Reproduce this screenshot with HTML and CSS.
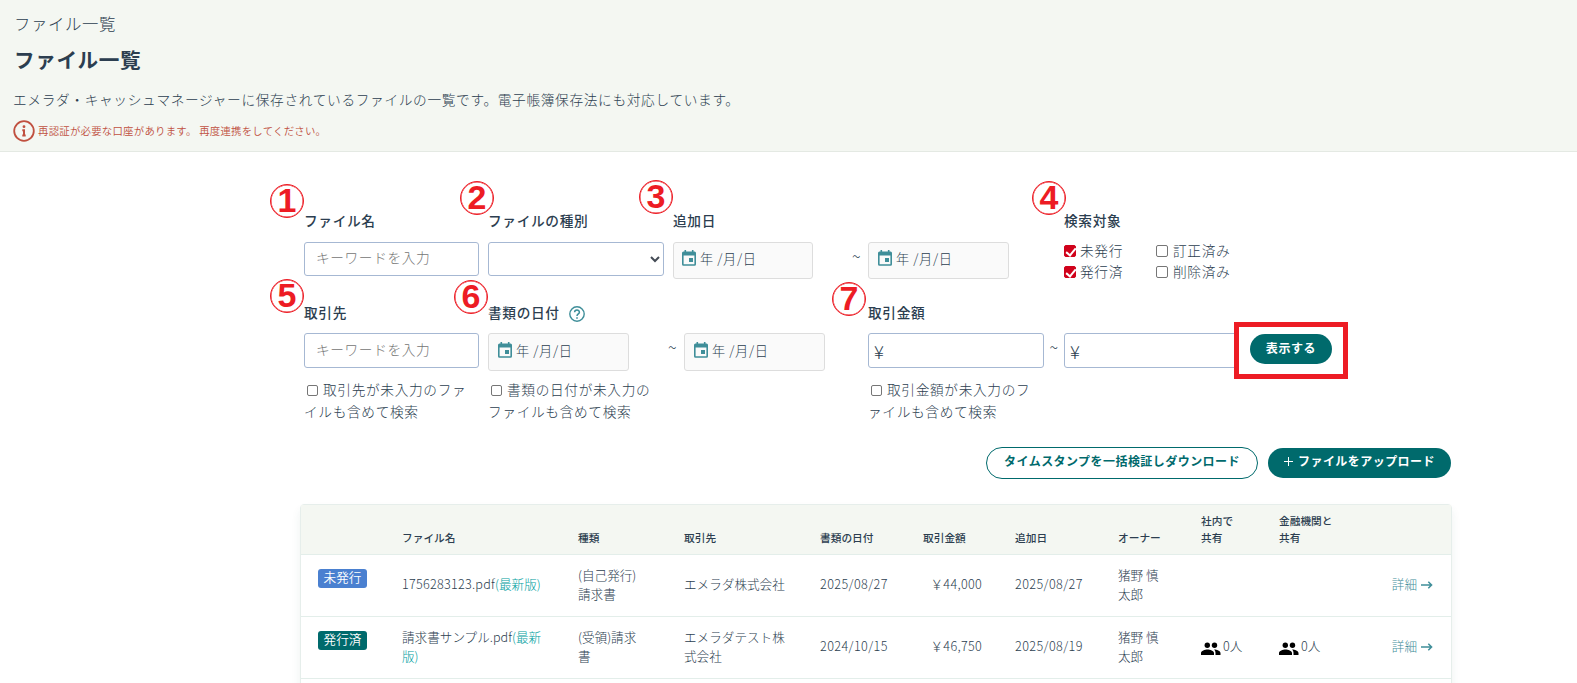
FILE: index.html
```html
<!DOCTYPE html>
<html lang="ja">
<head>
	<meta charset="UTF-8">
	<meta name="viewport" content="width=device-width, initial-scale=1.0">
	<title>ファイル一覧</title>
	<link rel="stylesheet" href="styles.css">
</head>
<body>
<svg class="defs" width="0" height="0">
	<symbol id="calendar" viewBox="0 0 14 16">
		<path fill="currentColor" fill-rule="evenodd" d="M2.5 0h1.6v1.6h5.8V0h1.6v1.6h1A1.5 1.5 0 0 1 14 3.1v11.2a1.5 1.5 0 0 1-1.5 1.5h-11A1.5 1.5 0 0 1 0 14.300V3.100A1.500 1.500 0 0 1 1.500 1.600h1zM1.600 5.500v8.700h10.800V5.500z"/>
		<path fill="currentColor" d="M7 8h4v4H7z"/>
	</symbol>
	<symbol id="people" viewBox="0 0 20 13">
		<circle cx="6.300" cy="3.200" r="2.700"/>
		<circle cx="13.500" cy="3.200" r="2.700"/>
		<path d="M0 13v-2c0-2.300 4-3.600 6.500-3.600S13 8.700 13 11v2zM13.100 7.500c2.600 0 6.400 1.200 6.400 3.500v2h-5v-2c0-1.500-.5-2.600-1.400-3.500z"/>
	</symbol>
	<symbol id="arrow" viewBox="0 0 12 10">
		<path fill="none" stroke="currentColor" stroke-width="1.500" d="M0 5h10.500M7.300 1.700L10.600 5 7.300 8.300"/>
	</symbol>
</svg>

<header class="page-header">
	<div class="breadcrumb">ファイル一覧</div>
	<h1>ファイル一覧</h1>
	<p class="lead">エメラダ・キャッシュマネージャーに保存されているファイルの一覧です。電子帳簿保存法にも対応しています。</p>
	<div class="notice">
		<svg width="22" height="22" viewBox="0 0 22 22"><circle cx="11" cy="11" r="9.800" fill="none" stroke="currentColor" stroke-width="1.800"/><circle cx="11" cy="6.700" r="1.400" fill="currentColor"/><path fill="none" stroke="currentColor" stroke-width="2" d="M9.300 10.200h1.700v5.300M9.300 15.500h3.400"/></svg>
		<span>再認証が必要な口座があります。 再度連携をしてください。</span>
	</div>
</header>

<main class="container">
	<form class="search">
		<div class="search-row first">
			<div class="field c1">
				<label>ファイル名</label><b class="num n1">1</b>
				<input class="text" type="text" placeholder="キーワードを入力">
			</div>
			<div class="field c2">
				<label>ファイルの種別</label><b class="num n2">2</b>
				<div class="select"><svg width="10" height="7" viewBox="0 0 10 7"><path fill="none" stroke="#444b55" stroke-width="2" d="M1 1l4 4 4-4"/></svg></div>
			</div>
			<div class="field c3">
				<label>追加日</label><b class="num n3">3</b>
				<div class="range">
					<div class="date"><svg class="cal"><use href="#calendar"/></svg>年 /月/日</div>
					<span class="tilde">~</span>
					<div class="date"><svg class="cal"><use href="#calendar"/></svg>年 /月/日</div>
				</div>
			</div>
			<div class="field c4">
				<label>検索対象</label><b class="num n4">4</b>
				<div class="checks">
					<span><i class="box on"></i>未発行</span>
					<span><i class="box"></i>訂正済み</span>
					<span><i class="box on"></i>発行済</span>
					<span><i class="box"></i>削除済み</span>
				</div>
			</div>
		</div>

		<div class="search-row second">
			<div class="field c1">
				<label>取引先</label><b class="num n5">5</b>
				<input class="text" type="text" placeholder="キーワードを入力">
				<p class="include"><i class="box"></i>取引先が未入力のファ<br>イルも含めて検索</p>
			</div>
			<div class="field c2">
				<label>書類の日付<svg class="help" viewBox="0 0 16 16"><circle cx="8" cy="8" r="7.200" fill="none" stroke="currentColor" stroke-width="1.400"/><path fill="none" stroke="currentColor" stroke-width="1.500" d="M5.600 6.300C5.600 3.300 10.400 3.300 10.400 6.200c0 1.700-2.400 1.800-2.400 3.800"/><path fill="currentColor" d="M7.200 11.200h1.600v1.500H7.200z"/></svg></label><b class="num n6">6</b>
				<div class="range">
					<div class="date"><svg class="cal"><use href="#calendar"/></svg>年 /月/日</div>
					<span class="tilde">~</span>
					<div class="date"><svg class="cal"><use href="#calendar"/></svg>年 /月/日</div>
				</div>
				<p class="include"><i class="box"></i>書類の日付が未入力の<br>ファイルも含めて検索</p>
			</div>
			<div class="field c3">
				<label>取引金額</label><b class="num n7">7</b>
				<div class="range">
					<div class="yen">¥</div>
					<span class="tilde">~</span>
					<div class="yen">¥</div>
				</div>
				<p class="include"><i class="box"></i>取引金額が未入力のフ<br>ァイルも含めて検索</p>
			</div>
			<div class="submit">
				<button type="button" class="btn">表示する</button>
			</div>
		</div>
	</form>

	<div class="actions">
		<button type="button" class="btn outline">タイムスタンプを一括検証しダウンロード</button>
		<button type="button" class="btn upload"><svg width="9" height="9" viewBox="0 0 9 9"><path stroke="#fff" stroke-width="1" d="M4.500 0v9M0 4.500h9"/></svg>ファイルをアップロード</button>
	</div>

	<table class="files">
		<colgroup>
			<col class="w-status"><col class="w-name"><col class="w-type"><col class="w-client"><col class="w-date"><col class="w-amount"><col class="w-added"><col class="w-owner"><col class="w-share"><col class="w-bank"><col>
		</colgroup>
		<thead>
			<tr>
				<th></th>
				<th>ファイル名</th>
				<th>種類</th>
				<th>取引先</th>
				<th>書類の日付</th>
				<th>取引金額</th>
				<th>追加日</th>
				<th>オーナー</th>
				<th>社内で<br>共有</th>
				<th>金融機関と<br>共有</th>
				<th></th>
			</tr>
		</thead>
		<tbody>
			<tr>
				<td class="status"><span class="tag blue">未発行</span></td>
				<td><span class="name">1756283123.pdf</span><a>(最新版)</a></td>
				<td>(自己発行)<br>請求書</td>
				<td>エメラダ株式会社</td>
				<td class="day">2025/08/27</td>
				<td class="amount">￥44,000</td>
				<td class="day">2025/08/27</td>
				<td>猪野 慎<br>太郎</td>
				<td></td>
				<td></td>
				<td class="detail">詳細<svg width="12" height="10"><use href="#arrow"/></svg></td>
			</tr>
			<tr>
				<td class="status"><span class="tag">発行済</span></td>
				<td>請求書サンプル.pdf<a>(最新<br>版)</a></td>
				<td>(受領)請求<br>書</td>
				<td>エメラダテスト株<br>式会社</td>
				<td class="day">2024/10/15</td>
				<td class="amount">￥46,750</td>
				<td class="day">2025/08/19</td>
				<td>猪野 慎<br>太郎</td>
				<td><svg class="people"><use href="#people"/></svg>0人</td>
				<td><svg class="people"><use href="#people"/></svg>0人</td>
				<td class="detail">詳細<svg width="12" height="10"><use href="#arrow"/></svg></td>
			</tr>
			<tr class="next"><td colspan="11"></td></tr>
		</tbody>
	</table>
</main>
</body>
</html>
```
FILE: styles.css
```css
*{box-sizing:border-box;}
html,body{height:100%;overflow:hidden;}
body,h1,p{margin:0;padding:0;}
body{font:300 13.7px/22px "Noto Sans CJK JP",sans-serif;letter-spacing:.6px;color:#2c3e50;background:#fff;}
input,button{font:inherit;letter-spacing:inherit;}
.defs{position:absolute;}

/* header */
.page-header{height:152px;padding:11px 14px 0;background:#f4f7f2;border-bottom:1px solid #e4e9e3;}
.breadcrumb{font-size:16.4px;line-height:24px;}
h1{margin-top:9px;font-size:20.6px;line-height:30px;font-weight:700;}
.lead{margin:14px 0 0 -1px;line-height:22px;letter-spacing:.65px;}
.notice{display:flex;align-items:center;height:22px;margin:10px 0 0 -1px;color:#c0503f;font-size:10.4px;font-weight:350;letter-spacing:.25px;}
.notice span{margin:-1px 0 0 3px;}

/* search form */
.container{width:1154px;margin:0 0 0 300px;}
.search{padding:58px 0 0 4px;}
.search-row{display:flex;}
.first{height:91px;}
.second{height:146px;}
.field{position:relative;}
.field label{display:flex;align-items:center;height:19px;margin-bottom:13px;font-weight:500;letter-spacing:.65px;}
.second .field label{height:21px;margin-bottom:11px;}
.first .c1,.second .c1{width:184px;}
.first .c2{width:185px;}
.first .c3{width:391px;}
.second .c2{width:380px;}
.second .c3{width:372px;}
.text,.select,.yen{display:block;width:175px;height:34px;border:1px solid #a6b8d3;border-radius:3px;background:#fff;}
.select,.yen{width:176px;}
.second .text,.second .yen{height:35px;}
.text{padding:0 11px 4px;color:#2c3e50;}
.text::placeholder{color:#757575;opacity:1;}
.select{display:flex;align-items:center;justify-content:flex-end;padding-right:3px;}
.yen{padding:6px 5px 0;font-size:18.5px;}
.range{display:flex;}
.tilde{font-size:16px;text-align:center;line-height:28px;}
.date{display:flex;align-items:center;width:140px;height:37px;padding:0 0 4px 8px;border:1px solid #ddd;border-radius:3px;background:#fafafa;font-size:13.2px;}
.date:last-child{width:141px;padding-left:9px;}
.first .tilde{width:55px;padding-left:32px;}
.second .date{width:141px;height:38px;padding-bottom:3px;padding-left:9px;}
.second .c2 .tilde{width:55px;padding-left:32px;}
.second .c3 .tilde{width:20px;}
.cal{width:14px;height:16px;margin:-2px 4px 0 0;color:#3f8e99;}
.help{width:16px;height:16px;margin:4px 0 0 9px;color:#3f8e99;}
.checks{display:grid;grid-template-columns:92px 90px;line-height:21px;margin-top:-2px;letter-spacing:.65px;}
.box{display:inline-block;width:12px;height:12px;margin-right:5px;border:1px solid #767676;border-radius:2px;background:#fff;vertical-align:-1px;}
.box.on{position:relative;margin-right:4px;border-color:#d0021b;background:#d0021b;}
.box.on::after{content:"";position:absolute;left:3px;top:0;width:4px;height:8px;border:solid #fff;border-width:0 2px 2px 0;transform:rotate(40deg);}
.include{margin-top:10px;line-height:22px;letter-spacing:.65px;white-space:nowrap;}
.c2 .include{margin-top:7px;}
.include .box{width:11px;height:11px;margin-left:3px;}
.submit{width:114px;height:57px;margin:21px 0 0 -6px;padding:7px 11px;border:5px solid #ed1c24;background:#fff;z-index:1;}

/* numbered markers */
.num{position:absolute;width:34px;height:34px;border:1px solid #ed1c24;border-radius:50%;box-shadow:inset 0 0 0 .5px #ed1c24;color:#ed1c24;font:700 34px/31px "Liberation Sans",sans-serif;letter-spacing:0;text-align:center;}
.n1{left:-34px;top:-26px;}
.n2{left:-28px;top:-29px;}
.n3{left:-34px;top:-30px;}
.n4{left:-32px;top:-29px;}
.n5{left:-34px;top:-22px;}
.n6{left:-34px;top:-21px;}
.n7{left:-36px;top:-19px;}

/* buttons */
.btn{display:block;width:82px;height:30px;padding:0 0 2px;border:0;border-radius:16px;background:#006a6c;color:#fff;font-size:12px;font-weight:700;line-height:28px;white-space:nowrap;}
.actions{display:flex;align-items:center;justify-content:flex-end;height:32px;gap:10px;padding-right:3px;}
.outline,.upload{padding-bottom:4px;line-height:26px;letter-spacing:.45px;}
.outline{width:272px;height:32px;border:1px solid #006a6c;background:#fff;color:#006a6c;}
.upload{width:183px;}
.upload svg{margin-right:5px;}

/* file table */
.files{width:1152px;margin-top:25px;table-layout:fixed;border-collapse:separate;border-spacing:0;border:1px solid #e6eeeb;border-radius:4px;box-shadow:0 6px 10px rgba(40,90,80,.08);font-size:12.6px;line-height:19px;letter-spacing:0;}
.files th{height:50px;padding:0 0 8px;background:#f4f7f2;border-bottom:1px solid #e3eeea;font-size:10.7px;font-weight:500;line-height:17px;text-align:left;vertical-align:bottom;white-space:nowrap;}
.files td{height:62px;padding:0 0 4px;border-bottom:1px solid #e3eeea;white-space:nowrap;}
.files .next td{height:30px;}
.files a{color:#00a0a0;}
.files .day{letter-spacing:.4px;}
.name{letter-spacing:.25px;}
.files td.status{padding:14px 0 0 17px;vertical-align:top;}
.tag{display:block;width:49px;height:19px;border-radius:3px;background:#006a6c;color:#fff;line-height:15px;text-align:center;font-weight:350;}
.blue{background:#4a80d0;}
.files .amount{padding-right:33px;letter-spacing:.3px;text-align:right;}
.people{width:20px;height:13px;margin-right:2px;vertical-align:-4px;fill:#000;}
.files .detail{padding-right:18px;color:#3f8e99;text-align:right;}
.detail svg{margin-left:4px;vertical-align:-1px;}
.w-status{width:101px;}
.w-name{width:176px;}
.w-type{width:106px;}
.w-client{width:136px;}
.w-date{width:103px;}
.w-amount{width:92px;}
.w-added{width:103px;}
.w-owner{width:83px;}
.w-share{width:78px;}
.w-bank{width:80px;}
```
